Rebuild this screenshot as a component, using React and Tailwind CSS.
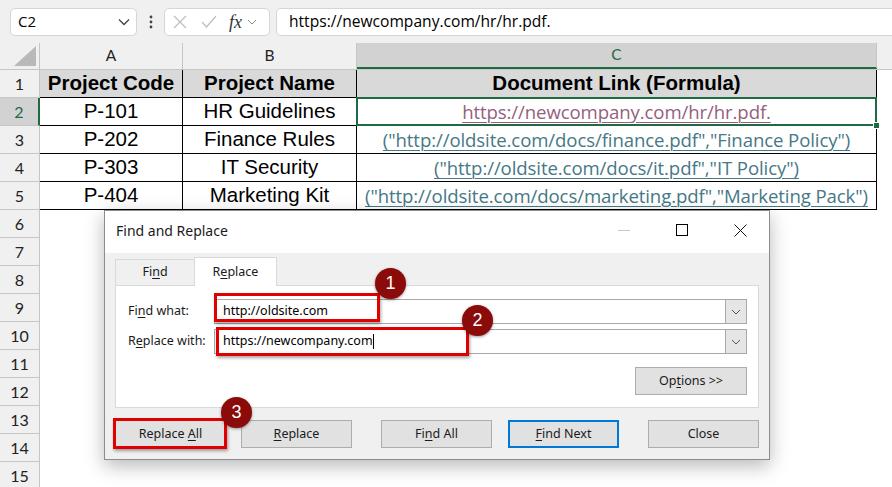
import React from 'react'

const ROWS = [
  { n: 2, code: 'P-101', name: 'HR Guidelines', link: 'https://newcompany.com/hr/hr.pdf.', visited: true },
  { n: 3, code: 'P-202', name: 'Finance Rules', link: '("http://oldsite.com/docs/finance.pdf","Finance Policy")' },
  { n: 4, code: 'P-303', name: 'IT Security', link: '("http://oldsite.com/docs/it.pdf","IT Policy")' },
  { n: 5, code: 'P-404', name: 'Marketing Kit', link: '("http://oldsite.com/docs/marketing.pdf","Marketing Pack")' },
]

const EMPTY = [6, 7, 8, 9, 10, 11, 12, 13, 14, 15]

const ui = { fontFamily: '"Noto Sans", "Open Sans", sans-serif' }
const arial = { fontFamily: '"Liberation Sans", Arial, sans-serif' }
const aptos = { fontFamily: 'Lato, "Open Sans", sans-serif' }
const linkFont = { fontFamily: '"Open Sans", Lato, sans-serif' }

function U({ children }) {
  return <span className="underline underline-offset-2">{children}</span>
}

function Badge({ n, className }) {
  return (
    <div
      className={`absolute w-[31px] h-[31px] rounded-full bg-[#8b0a0a] text-white flex items-center justify-center text-[18px] shadow-[0_1px_3px_rgba(0,0,0,0.4)] ${className}`}
      style={arial}
    >
      {n}
    </div>
  )
}

function DlgButton({ children, className = '', focus = false }) {
  return (
    <div className={`h-[28px] w-[111px] flex items-center justify-center bg-[#e1e1e1] text-[12.5px] text-[#1a1a1a] ${focus ? 'border-2 border-[#0078d7]' : 'border border-[#adadad]'} ${className}`}>
      <span>{children}</span>
    </div>
  )
}

function Combo({ children, className = '' }) {
  return (
    <div className={`h-[25px] w-[533px] flex bg-white border border-[#a9a9a9] ${className}`}>
      <div className="flex-1 flex items-center pl-[8px] text-[12.5px] text-black">{children}</div>
      <div className="w-[21px] bg-[#e5e5e5] border-l border-[#a9a9a9] flex items-center justify-center">
        <svg width="10" height="6" viewBox="0 0 10 6"><path d="M1 1l4 4 4-4" fill="none" stroke="#555" strokeWidth="1" /></svg>
      </div>
    </div>
  )
}

export default function App() {
  return (
    <div className="relative w-[892px] h-[487px] overflow-hidden bg-white select-none">
      {/* Formula bar */}
      <div className="h-[43px] bg-[#f0f0f0] flex items-center pl-[10px] gap-0">
        <div className="w-[127px] h-[28px] bg-white border border-[#d6d6d6] rounded-[5px] flex items-center justify-between pl-[7px] pr-[6px] text-[15px] text-black" style={linkFont}>
          <span>C2</span>
          <svg width="12" height="8" viewBox="0 0 12 8"><path d="M1 1.5l5 5 5-5" fill="none" stroke="#444" strokeWidth="1.3" /></svg>
        </div>
        <div className="w-[27px] flex justify-center">
          <svg width="4" height="14" viewBox="0 0 4 14"><circle cx="2" cy="2" r="1.4" fill="#444" /><circle cx="2" cy="7" r="1.4" fill="#444" /><circle cx="2" cy="12" r="1.4" fill="#444" /></svg>
        </div>
        <div className="w-[106px] h-[28px] bg-white border border-[#d6d6d6] rounded-[5px] flex items-center pl-[8px]">
          <svg width="14" height="14" viewBox="0 0 14 14"><path d="M1 1l12 12M13 1L1 13" stroke="#bdbdbd" strokeWidth="1.2" /></svg>
          <svg className="ml-[14px]" width="16" height="13" viewBox="0 0 16 13"><path d="M1 7l4.5 5L15 1" fill="none" stroke="#bdbdbd" strokeWidth="1.2" /></svg>
          <span className="ml-[12px] text-[18px] italic text-[#333] leading-none" style={{ fontFamily: '"Liberation Serif", serif' }}>fx</span>
          <svg className="ml-[5px]" width="10" height="6" viewBox="0 0 10 6"><path d="M1 1l4 4 4-4" fill="none" stroke="#888" strokeWidth="1" /></svg>
        </div>
        <div className="ml-[6px] flex-1 h-[28px] bg-white border-y border-l border-[#d6d6d6] rounded-l-[5px] flex items-center pl-[12px] text-[15.6px] text-black" style={linkFont}>
          https://newcompany.com/hr/hr.pdf.
        </div>
      </div>

      {/* Column headers */}
      <div className="h-[27px] flex bg-[#f0f0f0] border-b border-[#c6c6c6] text-[15.5px] text-[#222]" style={aptos}>
        <div className="w-[40px] relative border-r border-[#c6c6c6]">
          <svg className="absolute right-[3px] bottom-[3px]" width="22" height="20" viewBox="0 0 22 20"><path d="M22 0V20H0z" fill="#b9b9b9" /></svg>
        </div>
        <div className="w-[143px] flex items-center justify-center border-r border-[#c6c6c6]">A</div>
        <div className="w-[174px] flex items-center justify-center border-r border-[#c6c6c6]">B</div>
        <div className="w-[520px] flex items-center justify-center bg-[#d2d2d2] text-[#1e6b41] border-r border-[#c6c6c6] border-b-2 border-b-[#1e6b41]">C</div>
        <div className="flex-1" />
      </div>

      {/* Header row */}
      <div className="h-[28px] flex">
        <div className="w-[40px] bg-[#f0f0f0] border-r border-b border-[#c6c6c6] flex items-center justify-center text-[16px] text-[#222]" style={aptos}>1</div>
        <div className="w-[837px] flex bg-[#d9d9d9] border-b border-r border-black font-bold text-[20.5px] text-black" style={arial}>
          <div className="w-[143px] flex items-center justify-center border-r border-black">Project Code</div>
          <div className="w-[174px] flex items-center justify-center border-r border-black">Project Name</div>
          <div className="flex-1 flex items-center justify-center">Document Link (Formula)</div>
        </div>
      </div>

      {ROWS.map(r => (
        <div key={r.n} className="h-[28px] flex">
          <div
            className={`w-[40px] border-b flex items-center justify-center text-[16px] ${r.visited ? 'bg-[#d2d2d2] text-[#1e6b41] border-r-2 border-r-[#1e6b41] border-b-[#c6c6c6]' : 'bg-[#f0f0f0] text-[#222] border-r border-[#c6c6c6]'}`}
            style={aptos}
          >
            {r.n}
          </div>
          <div className="w-[837px] flex border-b border-r border-black text-[20.5px] text-black">
            <div className="w-[143px] flex items-center justify-center border-r border-black" style={arial}>{r.code}</div>
            <div className="w-[174px] flex items-center justify-center border-r border-black" style={arial}>{r.name}</div>
            <div
              className={`relative flex-1 flex items-center justify-center text-[18.6px] tracking-[-0.1px] underline underline-offset-[3px] decoration-1 ${r.visited ? 'text-[#96607d] outline-2 outline-[#1e6b41] -outline-offset-1' : 'text-[#467886]'}`}
              style={linkFont}
            >
              {r.link}
              {r.visited && <span className="absolute -right-[4px] -bottom-[4px] w-[7px] h-[7px] bg-[#1e6b41] border border-white" />}
            </div>
          </div>
        </div>
      ))}

      {EMPTY.map(n => (
        <div key={n} className="h-[28px] flex">
          <div className="w-[40px] bg-[#f0f0f0] border-r border-b border-[#c6c6c6] flex items-center justify-center text-[16px] text-[#222]" style={aptos}>{n}</div>
        </div>
      ))}

      {/* Find and Replace dialog */}
      <div className="absolute left-[104px] top-[210px] w-[666px] h-[250px] bg-[#f0f0f0] border border-[#8c8c8c] shadow-[0_6px_18px_rgba(0,0,0,0.28)] flex flex-col" style={ui}>
        <div className="h-[42px] bg-white flex items-center pl-[11px] pb-[4px] text-[14px] text-[#1a1a1a]">
          <span className="flex-1">Find and Replace</span>
          <div className="w-[58px] flex justify-center"><span className="block w-[12px] h-px bg-[#c8c8c8]" /></div>
          <div className="w-[58px] flex justify-center"><span className="block w-[12px] h-[12px] border border-black" /></div>
          <div className="w-[58px] flex justify-center">
            <svg width="13" height="13" viewBox="0 0 13 13"><path d="M0.5 0.5l12 12M12.5 0.5l-12 12" stroke="#111" strokeWidth="1" /></svg>
          </div>
        </div>

        <div className="px-[10px] pt-[3px]">
          <div className="flex items-end h-[29px] text-[12.5px] text-[#1a1a1a]">
            <div className="w-[79px] h-[26px] border-t border-l border-[#d9d9d9] flex items-center justify-center"><span>Fi<U>n</U>d</span></div>
            <div className="w-[83px] h-[29px] bg-white border-t border-x border-[#d9d9d9] flex items-start pt-[5px] justify-center relative -mb-px z-10"><span>R<U>e</U>place</span></div>
          </div>
          <div className="h-[123px] bg-white border border-[#d9d9d9] relative text-[12.5px] text-[#1a1a1a]">
            <div className="flex items-center mt-[13px]">
              <span className="w-[98px] pl-[12px]">Fi<U>n</U>d what:</span>
              <Combo>http://oldsite.com</Combo>
            </div>
            <div className="flex items-center mt-[5px]">
              <span className="w-[98px] pl-[12px]">R<U>e</U>place with:</span>
              <Combo>
                https://newcompany.com<span className="inline-block w-px h-[15px] bg-black" />
              </Combo>
            </div>
            <div className="flex justify-end pr-[11px] mt-[13px]">
              <DlgButton className="w-[112px]">Op<U>t</U>ions &gt;&gt;</DlgButton>
            </div>
          </div>

          <div className="flex mt-[12px]">
            <DlgButton>Replace <U>A</U>ll</DlgButton>
            <DlgButton className="ml-[15px]"><U>R</U>eplace</DlgButton>
            <DlgButton className="ml-[29px]">Fi<U>n</U>d All</DlgButton>
            <DlgButton className="ml-[16px]" focus><U>F</U>ind Next</DlgButton>
            <DlgButton className="ml-[29px]">Close</DlgButton>
          </div>
        </div>
      </div>

      {/* Highlights */}
      <div className="absolute left-[214px] top-[293px] w-[166px] h-[29px] border-[3px] border-[#e00000] shadow-[1px_2px_3px_rgba(0,0,0,0.35)]" />
      <div className="absolute left-[216px] top-[327px] w-[253px] h-[29px] border-[3px] border-[#e00000] shadow-[1px_2px_3px_rgba(0,0,0,0.35)]" />
      <div className="absolute left-[113px] top-[418px] w-[114px] h-[31px] border-[3px] border-[#e00000] shadow-[1px_2px_3px_rgba(0,0,0,0.35)]" />

      <Badge n="1" className="left-[375px] top-[268px]" />
      <Badge n="2" className="left-[462px] top-[305px]" />
      <Badge n="3" className="left-[221px] top-[397px]" />
    </div>
  )
}
